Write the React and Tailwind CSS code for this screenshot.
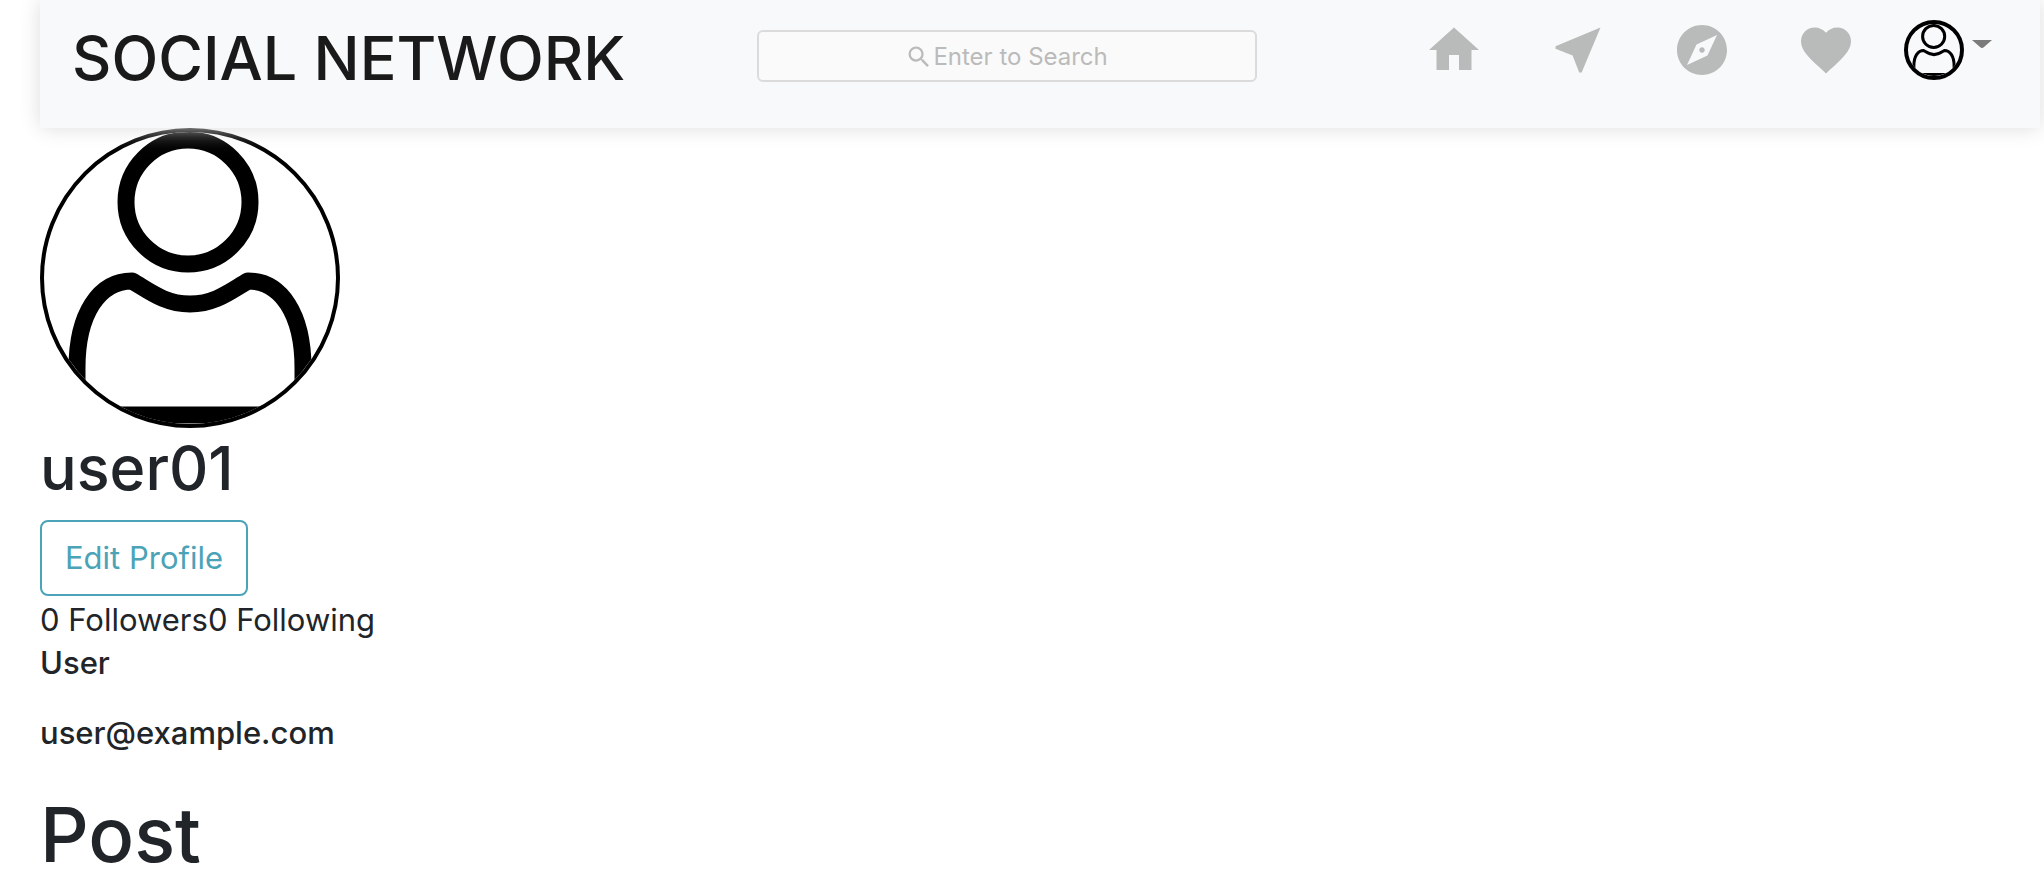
import React, { useState } from "react";
import { MdExplore, MdFavorite, MdHome, MdNearMe, MdSearch } from "react-icons/md";

const navLinks = [
  { label: "Home", icon: MdHome },
  { label: "Messages", icon: MdNearMe },
  { label: "Discover", icon: MdExplore },
  { label: "Notifications", icon: MdFavorite },
];

const user = {
  username: "user01",
  fullname: "User",
  email: "user@example.com",
  followers: 0,
  following: 0,
};

const Avatar = ({ className }) => (
  <span className={`block shrink-0 overflow-hidden rounded-full border-4 border-black ${className}`}>
    <svg viewBox="4 4 292 292" className="block h-full w-full" fill="none" stroke="#000" strokeWidth="17">
      <circle cx="148" cy="74" r="62" />
      <path
        strokeLinejoin="round"
        d="M37 300V240C37 186 59 153 92 153C108 162 124 176 150 176C176 176 192 162 208 153C241 153 263 186 263 240V300"
      />
      <path d="M20 287H280" />
    </svg>
  </span>
);

const Header = () => {
  const [search, setSearch] = useState("");

  return (
    <header className="relative z-10 flex h-32 items-start justify-between bg-[#f8f9fa] pr-12 pl-8 shadow-[0_0_20px_#ddd]">
      <a href="#" className="pt-5 text-[61px] leading-[76px] font-medium whitespace-nowrap text-[#1a1a1a]">
        SOCIAL NETWORK
      </a>

      <form className="relative mt-[30px] mr-9 w-[500px]" onSubmit={(e) => e.preventDefault()}>
        <input
          type="text"
          aria-label="Search"
          value={search}
          onChange={(e) => setSearch(e.target.value)}
          className="peer h-[52px] w-full rounded-md border-2 border-[#dbdbdb] bg-[#fafafa] px-4 text-center text-2xl outline-none"
        />
        {!search && (
          <span className="pointer-events-none absolute inset-0 flex items-center justify-center pt-0.5 text-2xl text-[#bbb] peer-focus:opacity-0">
            <MdSearch className="size-7" />
            Enter to Search
          </span>
        )}
      </form>

      <nav className="flex items-center pt-5">
        <ul className="flex gap-16">
          {navLinks.map(({ label, icon: Icon }) => (
            <li key={label}>
              <a href="#" aria-label={label} className="block text-[#b9bbba]">
                <Icon className="size-[60px]" />
              </a>
            </li>
          ))}
        </ul>
        <button type="button" aria-label="Account menu" className="ml-12 flex items-center gap-2">
          <Avatar className="size-[60px]" />
          <svg viewBox="0 0 20 8" className="mb-3 h-2 w-5" fill="#7b7b7b">
            <path d="M0 0H20L12 7Q10 9 8 7Z" />
          </svg>
        </button>
      </nav>
    </header>
  );
};

const App = () => {
  return (
    <div className="min-h-screen bg-white pr-1 pl-10 font-[Inter,sans-serif] text-[#212529]">
      <Header />
      <main>
        <Avatar className="size-[300px]" />
        <h2 className="text-[61px] leading-[80px] font-medium">{user.username}</h2>
        <button
          type="button"
          className="mt-3 block h-[76px] w-52 rounded-lg border-2 border-[#4ba3b7] text-[31px] text-[#4ba3b7]"
        >
          Edit Profile
        </button>
        <div className="text-[31px] leading-[48px]">
          <span>{user.followers} Followers</span>
          <span>{user.following} Following</span>
        </div>
        <h6 className="text-[31px] leading-[38px] font-medium">{user.fullname}</h6>
        <h6 className="mt-8 text-[31px] leading-[38px] font-medium">{user.email}</h6>
        <h1 className="mt-8 text-[76px] leading-[100px] font-medium">Post</h1>
      </main>
    </div>
  );
};

export default App;
